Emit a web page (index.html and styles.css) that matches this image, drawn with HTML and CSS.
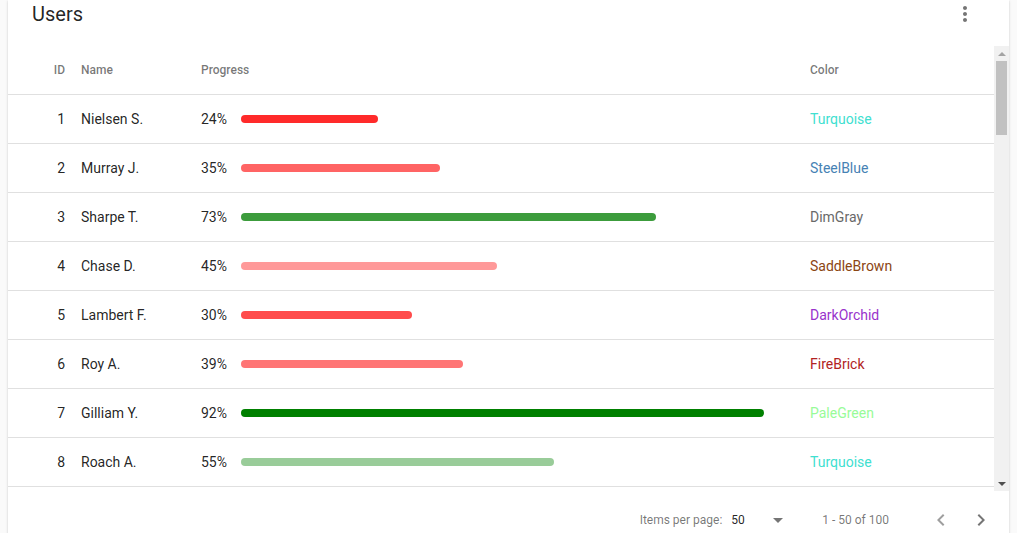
FILE: index.html
```html
<!DOCTYPE html>
<html lang="en">
<head>
<meta charset="utf-8">
<title>Users</title>
<link rel="stylesheet" href="styles.css">
</head>
<body>
<div class="card">
  <div class="card-header">
    <h1 class="title">Users</h1>
    <button class="icon-btn" aria-label="More">
      <svg viewBox="0 0 24 24" width="24" height="24"><path fill="currentColor" d="M12 8c1.1 0 2-.9 2-2s-.9-2-2-2-2 .9-2 2 .9 2 2 2zm0 2c-1.1 0-2 .9-2 2s.9 2 2 2 2-.9 2-2-.9-2-2-2zm0 6c-1.1 0-2 .9-2 2s.9 2 2 2 2-.9 2-2-.9-2-2-2z"/></svg>
    </button>
  </div>
  <div class="table-area">
  <div class="scroller">
    <div class="row head">
      <span class="c-id">ID</span><span class="c-name">Name</span><span class="c-prog">Progress</span><span class="c-color">Color</span>
    </div>
    <div class="row"><span class="c-id">1</span><span class="c-name">Nielsen S.</span><div class="c-prog"><span class="pct">24%</span><div class="track"><div class="bar" style="width:24%;background:#ff2a2a"></div></div></div><span class="c-color" style="color:#40E0D0">Turquoise</span></div>
    <div class="row"><span class="c-id">2</span><span class="c-name">Murray J.</span><div class="c-prog"><span class="pct">35%</span><div class="track"><div class="bar" style="width:35%;background:#ff6464"></div></div></div><span class="c-color" style="color:#4682B4">SteelBlue</span></div>
    <div class="row"><span class="c-id">3</span><span class="c-name">Sharpe T.</span><div class="c-prog"><span class="pct">73%</span><div class="track"><div class="bar" style="width:73%;background:#3c9c3c"></div></div></div><span class="c-color" style="color:#696969">DimGray</span></div>
    <div class="row"><span class="c-id">4</span><span class="c-name">Chase D.</span><div class="c-prog"><span class="pct">45%</span><div class="track"><div class="bar" style="width:45%;background:#ff9999"></div></div></div><span class="c-color" style="color:#8B4513">SaddleBrown</span></div>
    <div class="row"><span class="c-id">5</span><span class="c-name">Lambert F.</span><div class="c-prog"><span class="pct">30%</span><div class="track"><div class="bar" style="width:30%;background:#ff4c4c"></div></div></div><span class="c-color" style="color:#9932CC">DarkOrchid</span></div>
    <div class="row"><span class="c-id">6</span><span class="c-name">Roy A.</span><div class="c-prog"><span class="pct">39%</span><div class="track"><div class="bar" style="width:39%;background:#ff7575"></div></div></div><span class="c-color" style="color:#B22222">FireBrick</span></div>
    <div class="row"><span class="c-id">7</span><span class="c-name">Gilliam Y.</span><div class="c-prog"><span class="pct">92%</span><div class="track"><div class="bar" style="width:92%;background:#008000"></div></div></div><span class="c-color" style="color:#98FB98">PaleGreen</span></div>
    <div class="row"><span class="c-id">8</span><span class="c-name">Roach A.</span><div class="c-prog"><span class="pct">55%</span><div class="track"><div class="bar" style="width:55%;background:#99cc99"></div></div></div><span class="c-color" style="color:#40E0D0">Turquoise</span></div>
  </div>
  <div class="vscroll" aria-hidden="true">
    <div class="sb-btn"><span class="sb-up"></span></div>
    <div class="sb-thumb"></div>
    <div class="sb-track"></div>
    <div class="sb-btn"><span class="sb-down"></span></div>
  </div>
  </div>
  <div class="paginator">
    <span class="pg-label">Items per page:</span>
    <div class="pg-select"><span class="pg-value">50</span><span class="pg-arrow"></span></div>
    <span class="pg-range">1 - 50 of 100</span>
    <button class="icon-btn disabled" aria-label="Previous page">
      <svg viewBox="0 0 24 24" width="24" height="24"><path fill="currentColor" d="M15.41 7.41L14 6l-6 6 6 6 1.41-1.41L10.83 12z"/></svg>
    </button>
    <button class="icon-btn" aria-label="Next page">
      <svg viewBox="0 0 24 24" width="24" height="24"><path fill="currentColor" d="M10 6L8.59 7.41 13.17 12l-4.58 4.59L10 18l6-6z"/></svg>
    </button>
  </div>
</div>
</body>
</html>
```
FILE: styles.css
```css
html, body {
  margin: 0;
  padding: 0;
  height: 100%;
  overflow: hidden;
}
body {
  background: #fafafa;
  font-family: Roboto, "Liberation Sans", sans-serif;
  color: rgba(0, 0, 0, 0.87);
  padding: 0 8px;
}
.card {
  background: #fff;
  box-shadow: 0 2px 1px -1px rgba(0,0,0,.2), 0 1px 1px 0 rgba(0,0,0,.14), 0 1px 3px 0 rgba(0,0,0,.12);
  display: flex;
  flex-direction: column;
}
.card-header {
  height: 46px;
  display: flex;
  align-items: flex-start;
  justify-content: space-between;
  padding: 0 24px 0 24px;
  box-sizing: border-box;
}
.title {
  margin: 0;
  font-size: 20px;
  font-weight: 400;
  line-height: 28px;
  color: rgba(0, 0, 0, 0.87);
}
.icon-btn {
  width: 40px;
  height: 28px;
  border: 0;
  padding: 0;
  background: transparent;
  color: rgba(0, 0, 0, 0.54);
  display: flex;
  align-items: center;
  justify-content: center;
}
.icon-btn svg { display: block; }
.table-area {
  display: flex;
  height: 445px;
}
.scroller {
  flex: 1;
  overflow: hidden;
}
.vscroll {
  width: 15px;
  flex: none;
  background: #f1f1f1;
  display: flex;
  flex-direction: column;
  align-items: center;
}
.sb-btn {
  width: 15px;
  height: 15px;
  flex: none;
  display: flex;
  align-items: center;
  justify-content: center;
}
.sb-up {
  width: 0;
  height: 0;
  border-left: 4px solid transparent;
  border-right: 4px solid transparent;
  border-bottom: 4px solid #a3a3a3;
}
.sb-down {
  width: 0;
  height: 0;
  border-left: 4px solid transparent;
  border-right: 4px solid transparent;
  border-top: 4px solid #505050;
}
.sb-thumb {
  width: 11px;
  height: 74px;
  flex: none;
  background: #c1c1c1;
}
.sb-track {
  flex: 1;
}
.row {
  display: grid;
  grid-template-columns: 32px 136px 609px 1fr;
  padding-left: 25px;
  height: 48px;
  align-items: center;
  border-bottom: 1px solid rgba(0, 0, 0, 0.12);
  font-size: 14px;
  background: #fff;
}
.row.head {
  font-size: 12px;
  font-weight: 500;
  color: rgba(0, 0, 0, 0.54);
}
.c-id {
  text-align: right;
}
.c-name {
  padding-left: 16px;
}
.c-prog {
  display: flex;
  align-items: center;
}
.pct {
  width: 40px;
  flex: none;
}
.track {
  width: 569px;
  flex: none;
}
.bar {
  height: 8px;
  border-radius: 4px;
}
.paginator {
  height: 58px;
  display: flex;
  align-items: center;
  justify-content: flex-end;
  padding-right: 8px;
  font-size: 12px;
  color: rgba(0, 0, 0, 0.54);
}
.paginator .icon-btn {
  height: 40px;
}
.paginator .icon-btn.disabled {
  color: rgba(0, 0, 0, 0.38);
}
.pg-label {
  margin-right: 9px;
}
.pg-select {
  width: 58px;
  display: flex;
  align-items: center;
  justify-content: space-between;
  margin-right: 9px;
}
.pg-value {
  color: rgba(0, 0, 0, 0.87);
}
.pg-arrow {
  width: 0;
  height: 0;
  border-left: 5px solid transparent;
  border-right: 5px solid transparent;
  border-top: 5px solid rgba(0, 0, 0, 0.54);
  margin-right: 6px;
}
.pg-range {
  margin: 0 32px 0 24px;
}
```
